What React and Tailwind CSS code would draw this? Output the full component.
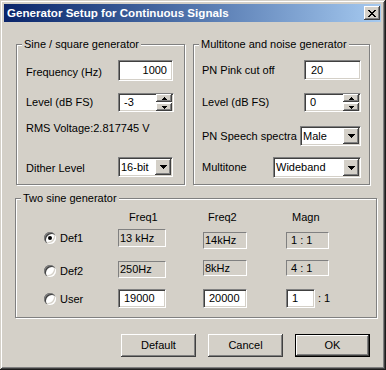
import React from "react";

const sunken =
  "border border-t-[#808080] border-l-[#808080] border-b-white border-r-white shadow-[inset_1px_1px_0_#404040,inset_-1px_-1px_0_#d4d0c8]";
const raised =
  "bg-[#d4d0c8] shadow-[inset_-1px_-1px_0_#404040,inset_1px_1px_0_#ffffff,inset_-2px_-2px_0_#808080]";
const flat =
  "border border-t-[#808080] border-l-[#808080] border-b-white border-r-white bg-[#d4d0c8] flex items-center";

function Arrow({ up, big }) {
  if (big) {
    return (
      <svg width="7" height="4" viewBox="0 0 7 4" shapeRendering="crispEdges">
        <rect x="0" y="0" width="7" height="1" fill="#000" />
        <rect x="1" y="1" width="5" height="1" fill="#000" />
        <rect x="2" y="2" width="3" height="1" fill="#000" />
        <rect x="3" y="3" width="1" height="1" fill="#000" />
      </svg>
    );
  }
  return (
    <svg width="5" height="3" viewBox="0 0 5 3" shapeRendering="crispEdges">
      {up ? (
        <>
          <rect x="2" y="0" width="1" height="1" fill="#000" />
          <rect x="1" y="1" width="3" height="1" fill="#000" />
          <rect x="0" y="2" width="5" height="1" fill="#000" />
        </>
      ) : (
        <>
          <rect x="0" y="0" width="5" height="1" fill="#000" />
          <rect x="1" y="1" width="3" height="1" fill="#000" />
          <rect x="2" y="2" width="1" height="1" fill="#000" />
        </>
      )}
    </svg>
  );
}

function Group({ label, className, children }) {
  return (
    <div
      className={`relative border border-[#808080] shadow-[inset_1px_1px_0_#ffffff,1px_1px_0_#ffffff] ${className}`}
    >
      <span className="absolute -top-[7px] left-[5px] px-[2px] bg-[#d4d0c8] leading-[13px] whitespace-nowrap">
        {label}
      </span>
      {children}
    </div>
  );
}

function Edit({ className, children }) {
  return (
    <div className={`${sunken} bg-white flex items-center ${className}`}>
      {children}
    </div>
  );
}

function Spin({ value, className }) {
  return (
    <div className={`${sunken} bg-white flex h-[19px] ${className}`}>
      <span className="flex-1 flex items-center pl-[5px]">{value}</span>
      <div className="flex flex-col gap-[1px] pr-[1px] w-[17px]">
        <div className={`${raised} flex-1 flex items-center justify-center`}>
          <Arrow up />
        </div>
        <div className={`${raised} flex-1 flex items-center justify-center`}>
          <Arrow />
        </div>
      </div>
    </div>
  );
}

function Combo({ value, className }) {
  return (
    <div className={`${sunken} bg-white flex ${className}`}>
      <span className="flex-1 flex items-center pl-[2px]">{value}</span>
      <div className="p-[1px] flex">
        <div className={`${raised} w-[16px] flex items-center justify-center`}>
          <Arrow big />
        </div>
      </div>
    </div>
  );
}

function Radio({ checked }) {
  return (
    <span className="w-[12px] h-[12px] rounded-full bg-white shadow-[inset_1px_1px_0_#808080,inset_2px_2px_0_#404040,inset_-1px_-1px_0_#ffffff,inset_-2px_-2px_0_#d4d0c8] flex items-center justify-center shrink-0">
      {checked && <span className="w-[4px] h-[4px] rounded-full bg-black" />}
    </span>
  );
}

function Button({ children, def }) {
  if (def) {
    return (
      <div className="w-[75px] h-[23px] border border-black flex">
        <div className={`${raised} flex-1 flex items-center justify-center`}>
          {children}
        </div>
      </div>
    );
  }
  return (
    <div className={`${raised} w-[75px] h-[23px] flex items-center justify-center`}>
      {children}
    </div>
  );
}

function CloseX() {
  const px = [
    [0, 0], [1, 0], [6, 0], [7, 0],
    [1, 1], [2, 1], [5, 1], [6, 1],
    [2, 2], [3, 2], [4, 2], [5, 2],
    [3, 3], [4, 3],
    [2, 4], [3, 4], [4, 4], [5, 4],
    [1, 5], [2, 5], [5, 5], [6, 5],
    [0, 6], [1, 6], [6, 6], [7, 6],
  ];
  return (
    <svg width="8" height="7" viewBox="0 0 8 7" shapeRendering="crispEdges">
      {px.map(([x, y]) => (
        <rect key={`${x}-${y}`} x={x} y={y} width="1" height="1" fill="#000" />
      ))}
    </svg>
  );
}

export default function App() {
  return (
    <div className="w-[386px] h-[370px] bg-[#1c1c1c] overflow-hidden font-['Liberation_Sans',Arial,sans-serif] text-[11px] text-black">
      <div className="w-[385px] h-[369px] bg-[#d4d0c8] p-[4px] shadow-[inset_1px_1px_0_#d4d0c8,inset_-1px_-1px_0_#404040,inset_2px_2px_0_#ffffff,inset_-2px_-2px_0_#808080] flex flex-col">
        {/* Title bar */}
        <div className="h-[18px] bg-gradient-to-r from-[#0a246a] to-[#a6caf0] flex items-center justify-between pl-[3px] pr-[1px] shrink-0">
          <span className="text-white font-bold text-[11.6px] leading-[18px] whitespace-nowrap">
            Generator Setup for Continuous Signals
          </span>
          <div className={`${raised} w-[16px] h-[14px] flex items-center justify-center`}>
            <CloseX />
          </div>
        </div>

        {/* Content */}
        <div className="flex flex-col pt-[22px] pl-[12px]">
          <div className="flex gap-[8px]">
            <Group
              label="Sine / square generator"
              className="w-[169px] h-[141px] pt-[15px] pl-[9px]"
            >
              <div className="flex items-center h-[21px]">
                <span className="w-[92px] pt-[4px]">Frequency (Hz)</span>
                <Edit className="w-[55px] h-[21px] justify-end pr-[5px]">1000</Edit>
              </div>
              <div className="flex items-center h-[19px] mt-[12px]">
                <span className="w-[92px]">Level (dB FS)</span>
                <Spin value="-3" className="w-[56px]" />
              </div>
              <div className="mt-[10px] h-[13px] leading-[13px] whitespace-nowrap">
                RMS Voltage:2.817745 V
              </div>
              <div className="flex items-center h-[20px] mt-[22px]">
                <span className="w-[92px] pt-[2px]">Dither Level</span>
                <Combo value="16-bit" className="w-[55px] h-[20px]" />
              </div>
            </Group>

            <Group
              label="Multitone and noise generator"
              className="w-[177px] h-[141px] pt-[15px] pl-[8px] pr-[8px]"
            >
              <div className="flex items-center justify-between h-[20px]">
                <span>PN Pink cut off</span>
                <Edit className="w-[57px] h-[20px] pl-[6px]">20</Edit>
              </div>
              <div className="flex items-center justify-between h-[19px] mt-[13px]">
                <span>Level (dB FS)</span>
                <Spin value="0" className="w-[57px]" />
              </div>
              <div className="flex items-center justify-between h-[20px] mt-[14px]">
                <span className="whitespace-nowrap">PN Speech spectra</span>
                <Combo value="Male" className="w-[61px] h-[20px]" />
              </div>
              <div className="flex items-center justify-between h-[21px] mt-[11px]">
                <span>Multitone</span>
                <Combo value="Wideband" className="w-[88px] h-[21px]" />
              </div>
            </Group>
          </div>

          <Group
            label="Two sine generator"
            className="w-[362px] h-[120px] mt-[13px] -ml-[1px] pt-[12px]"
          >
            <div className="flex h-[13px] leading-[13px] pl-[113px]">
              <span className="w-[79px]">Freq1</span>
              <span className="w-[84px]">Freq2</span>
              <span>Magn</span>
            </div>

            <div className="flex items-start h-[20px] mt-[5px]">
              <div className="w-[102px] h-[18px] pl-[28px] flex items-center gap-[4px]">
                <Radio checked />
                <span>Def1</span>
              </div>
              <div className={`${flat} w-[48px] h-[18px] pl-[1px]`}>13 kHz</div>
              <div className={`${flat} w-[44px] h-[17px] ml-[37px] mt-[3px] pl-[1px]`}>14kHz</div>
              <div className={`${flat} w-[43px] h-[17px] ml-[39px] mt-[3px] pl-[4px]`}>1 : 1</div>
            </div>

            <div className="flex items-start h-[18px] mt-[11px]">
              <div className="w-[102px] h-[22px] pl-[28px] flex items-center gap-[4px]">
                <Radio />
                <span>Def2</span>
              </div>
              <div className={`${flat} w-[48px] h-[17px] mt-[1px] pl-[1px]`}>250Hz</div>
              <div className={`${flat} w-[44px] h-[16px] ml-[37px] pl-[1px]`}>8kHz</div>
              <div className={`${flat} w-[43px] h-[16px] ml-[39px] pl-[4px]`}>4 : 1</div>
            </div>

            <div className="flex items-start h-[19px] mt-[11px]">
              <div className="w-[102px] h-[20px] pl-[28px] flex items-center gap-[4px]">
                <Radio />
                <span>User</span>
              </div>
              <Edit className="w-[48px] h-[19px] pl-[5px]">19000</Edit>
              <Edit className="w-[44px] h-[19px] ml-[37px] pl-[5px]">20000</Edit>
              <Edit className="w-[29px] h-[19px] ml-[39px] pl-[5px]">1</Edit>
              <span className="ml-[3px] h-[19px] flex items-center">: 1</span>
            </div>
          </Group>

          <div className="flex gap-[12px] mt-[16px] ml-[105px]">
            <Button>Default</Button>
            <Button>Cancel</Button>
            <Button def>OK</Button>
          </div>
        </div>
      </div>
    </div>
  );
}
